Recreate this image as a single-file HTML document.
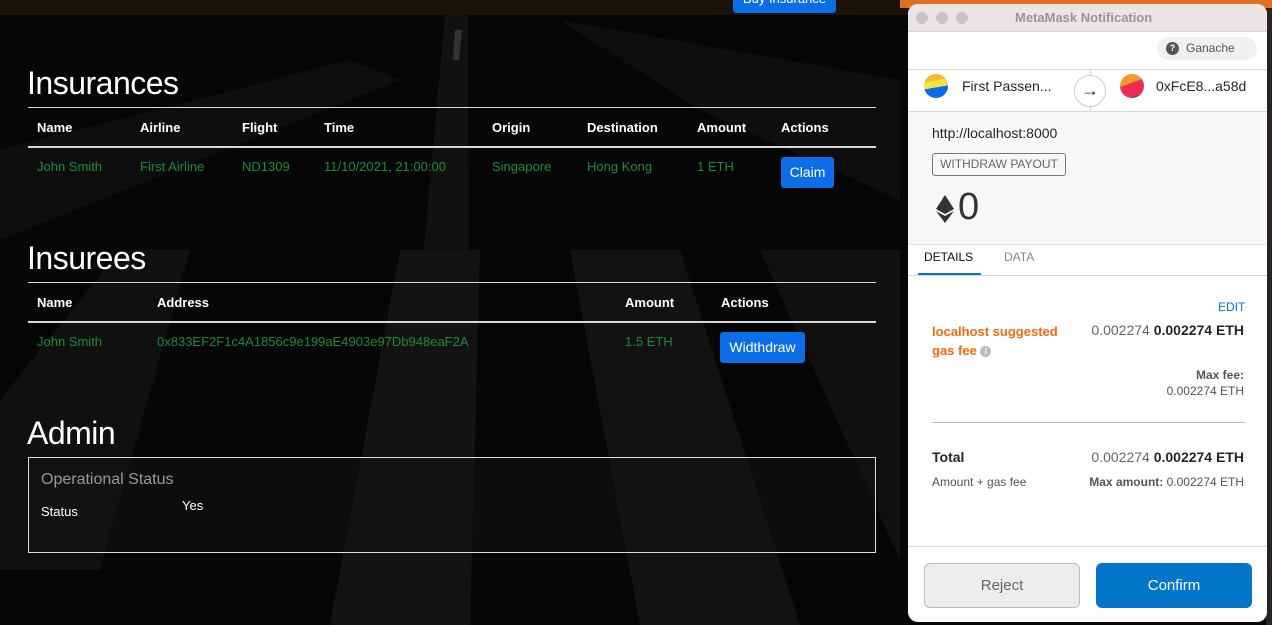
<!DOCTYPE html>
<html><head><meta charset="utf-8"><style>
*{margin:0;padding:0;box-sizing:border-box}
body{width:1272px;height:625px;overflow:hidden;position:relative;background:#060606;font-family:"Liberation Sans",sans-serif}
.a{position:absolute;white-space:nowrap}
h1{position:absolute;color:#fff;font-weight:400;font-size:32px;letter-spacing:-0.5px}
.hr{position:absolute;left:28px;width:848px;background:#d8d8d8}
.th{position:absolute;color:#fff;font-weight:bold;font-size:13px}
.td{position:absolute;color:#1d8a3a;font-size:13px}
.btn{position:absolute;background:#0b6ee6;color:#fff;font-size:14px;border-radius:3px;text-align:center}
.mm{position:absolute;left:908px;top:4px;width:359px;height:618px;background:#fff;border-radius:10px;overflow:hidden;font-family:"Liberation Sans",sans-serif}
.mm .a{font-size:13px;color:#24272a}
</style></head><body>
<svg class="a" style="left:0;top:0" width="910" height="625">
<polygon points="445,15 468,15 470,625 390,625" fill="#111"/>
<polygon points="455,30 462,30 459,60 453,60" fill="#333"/>
<polygon points="0,150 350,60 400,80 0,240" fill="#0e0e0e"/>
<polygon points="560,20 900,80 900,200 700,110" fill="#0e0e0e"/>
<polygon points="120,250 190,250 100,570 0,570 0,400" fill="#101010"/>
<polygon points="400,250 480,250 470,625 330,625" fill="#131313"/>
<polygon points="570,250 680,250 800,625 640,625" fill="#121212"/>
<polygon points="760,250 900,250 900,560" fill="#101010"/>
<rect x="0" y="0" width="910" height="15" fill="#1c1408"/>
</svg>
<div class="btn" style="left:733px;top:-10px;width:103px;height:23px;line-height:18px;font-size:13px">Buy Insurance</div>

<h1 style="left:27px;top:65px">Insurances</h1>
<div class="hr" style="top:107px;height:1px"></div>
<div class="th" style="left:37px;top:120px">Name</div><div class="th" style="left:140px;top:120px">Airline</div><div class="th" style="left:242px;top:120px">Flight</div><div class="th" style="left:324px;top:120px">Time</div><div class="th" style="left:492px;top:120px">Origin</div><div class="th" style="left:587px;top:120px">Destination</div><div class="th" style="left:697px;top:120px">Amount</div><div class="th" style="left:781px;top:120px">Actions</div>
<div class="hr" style="top:146px;height:2px"></div>
<div class="td" style="left:37px;top:159px">John Smith</div><div class="td" style="left:140px;top:159px">First Airline</div><div class="td" style="left:242px;top:159px">ND1309</div><div class="td" style="left:324px;top:159px">11/10/2021, 21:00:00</div><div class="td" style="left:492px;top:159px">Singapore</div><div class="td" style="left:587px;top:159px">Hong Kong</div><div class="td" style="left:697px;top:159px">1 ETH</div>
<div class="btn" style="left:781px;top:157px;width:53px;height:31px;line-height:31px">Claim</div>

<h1 style="left:27px;top:240px">Insurees</h1>
<div class="hr" style="top:282px;height:1px"></div>
<div class="th" style="left:37px;top:295px">Name</div><div class="th" style="left:157px;top:295px">Address</div><div class="th" style="left:625px;top:295px">Amount</div><div class="th" style="left:721px;top:295px">Actions</div>
<div class="hr" style="top:321px;height:2px"></div>
<div class="td" style="left:37px;top:334px">John Smith</div><div class="td" style="left:157px;top:334px">0x833EF2F1c4A1856c9e199aE4903e97Db948eaF2A</div><div class="td" style="left:625px;top:334px">1.5 ETH</div>
<div class="btn" style="left:720px;top:332px;width:85px;height:31px;line-height:31px">Widthdraw</div>

<h1 style="left:27px;top:415px">Admin</h1>
<div class="a" style="left:28px;top:457px;width:848px;height:96px;border:1px solid #ddd;background:rgba(20,20,20,.5)"></div>
<div class="a" style="left:41px;top:471px;color:#999;font-size:16px">Operational Status</div>
<div class="a" style="left:41px;top:504px;color:#fff;font-size:13px">Status</div>
<div class="a" style="left:182px;top:498px;color:#fff;font-size:13px">Yes</div>

<div class="a" style="left:900px;top:0;width:372px;height:8px;background:#e07020"></div>
<div class="a" style="left:1266px;top:8px;width:6px;height:617px;background:#2a231e"></div>

<div class="mm">
<div class="a" style="left:0;top:0;width:359px;height:28px;background:#ece4e4;border-bottom:1px solid #d6d0d0"></div>
<div class="a" style="left:8px;top:8px;width:12px;height:12px;border-radius:50%;background:#c8c2c2"></div>
<div class="a" style="left:28px;top:8px;width:12px;height:12px;border-radius:50%;background:#c8c2c2"></div>
<div class="a" style="left:48px;top:8px;width:12px;height:12px;border-radius:50%;background:#c8c2c2"></div>
<div class="a" style="left:107px;top:6px;font-weight:bold;color:#9a9494!important;font-size:13px">MetaMask Notification</div>
<div class="a" style="left:249px;top:33px;width:100px;height:23px;border-radius:12px;background:#f0f0f0"></div>
<div class="a" style="left:258px;top:38px;width:13px;height:13px;border-radius:50%;background:#555;color:#fff;font-size:9px;font-weight:bold;text-align:center;line-height:13px">?</div>
<div class="a" style="left:278px;top:37px;font-size:12px!important;color:#555!important">Ganache</div>
<div class="a" style="left:0;top:65px;width:359px;height:1px;background:#d6d9dc"></div>
<div class="a" style="left:182px;top:65px;width:1px;height:42px;background:#d6d9dc"></div>
<div class="a" style="left:16px;top:70px;width:24px;height:24px;border-radius:50%;background:linear-gradient(170deg,#f5b82a 0 30%,#f6e23a 30% 55%,#0a6ce8 55%)"></div>
<div class="a" style="left:54px;top:74px;font-size:14px!important">First Passen...</div>
<div class="a" style="left:166px;top:71px;width:32px;height:32px;border-radius:50%;background:#fff;border:1px solid #ccc;text-align:center;line-height:29px;font-size:18px;color:#333">&#8594;</div>
<div class="a" style="left:212px;top:70px;width:24px;height:24px;border-radius:50%;background:linear-gradient(160deg,#f39a2a 0 40%,#ee2c52 40% 85%,#2845d8 85%)"></div>
<div class="a" style="left:248px;top:74px;font-size:14px!important">0xFcE8...a58d</div>
<div class="a" style="left:0;top:107px;width:359px;height:1px;background:#d6d9dc"></div>
<div class="a" style="left:0;top:108px;width:359px;height:132px;background:#f6f8f8"></div>
<div class="a" style="left:24px;top:121px;font-size:14px!important">http://localhost:8000</div>
<div class="a" style="left:24px;top:149px;width:134px;height:23px;border:1px solid #777;border-radius:3px;font-size:12px!important;color:#666!important;text-align:center;line-height:21px">WITHDRAW PAYOUT</div>
<svg class="a" style="left:28px;top:191px" width="18" height="28"><polygon points="9,0 18,14 9,19 0,14" fill="#333"/><polygon points="9,21 18,16 9,28 0,16" fill="#333"/></svg>
<div class="a" style="left:50px;top:182px;font-size:38px!important;color:#333!important">0</div>
<div class="a" style="left:0;top:240px;width:359px;height:1px;background:#e0e0e0"></div>
<div class="a" style="left:16px;top:246px;font-size:12px!important;color:#111!important">DETAILS</div>
<div class="a" style="left:10px;top:269px;width:63px;height:2px;background:#0376c9"></div>
<div class="a" style="left:96px;top:246px;font-size:12px!important;color:#888!important">DATA</div>
<div class="a" style="left:0;top:271px;width:359px;height:1px;background:#d6d9dc"></div>
<div class="a" style="left:310px;top:296px;font-size:12px!important;color:#0376c9!important">EDIT</div>
<div class="a" style="left:24px;top:318px;font-size:13px!important;color:#f66a0a!important;font-weight:bold;line-height:19px">localhost suggested<br>gas fee <span style="display:inline-block;width:11px;height:11px;border-radius:50%;background:#bbb;color:#fff;font-size:8px;text-align:center;line-height:11px;vertical-align:1px">i</span></div>
<div class="a" style="right:23px;top:318px;font-size:14px!important;color:#666!important">0.002274 <b style="color:#24272a">0.002274 ETH</b></div>
<div class="a" style="right:23px;top:363px;font-size:12px!important;color:#555!important;text-align:right;line-height:16px"><b>Max fee:</b><br>0.002274 ETH</div>
<div class="a" style="left:24px;top:418px;width:313px;height:1px;background:#bbc0c5"></div>
<div class="a" style="left:24px;top:445px;font-weight:bold;font-size:14px!important">Total</div>
<div class="a" style="right:23px;top:445px;font-size:14px!important;color:#666!important">0.002274 <b style="color:#24272a">0.002274 ETH</b></div>
<div class="a" style="left:24px;top:471px;font-size:12px!important;color:#555!important">Amount + gas fee</div>
<div class="a" style="right:23px;top:471px;font-size:12px!important;color:#555!important"><b>Max amount:</b> 0.002274 ETH</div>
<div class="a" style="left:0;top:542px;width:359px;height:1px;background:#d6d9dc"></div>
<div class="a" style="left:16px;top:559px;width:156px;height:45px;border:1px solid #bbb;border-radius:6px;background:#ececec;text-align:center;line-height:43px;font-size:15px!important;color:#666!important">Reject</div>
<div class="a" style="left:188px;top:559px;width:156px;height:45px;border-radius:6px;background:#0376c9;text-align:center;line-height:45px;font-size:15px!important;color:#fff!important">Confirm</div>
</div>
</body></html>
